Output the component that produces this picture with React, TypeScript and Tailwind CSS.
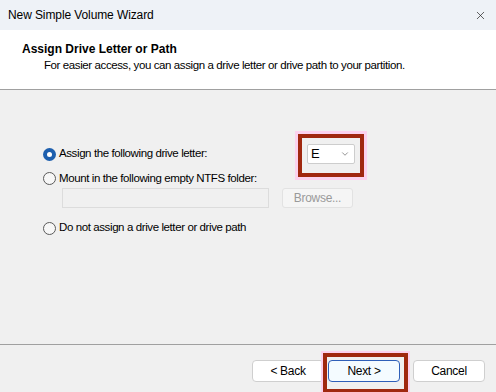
import { X, ChevronDown } from 'lucide-react';

// Win11-style wizard page: drive letter assignment

function Radio({ checked }: { checked?: boolean }) {
  if (checked) {
    return (
      <span className="w-[13px] h-[13px] rounded-full bg-[#1d5fae] flex items-center justify-center shrink-0">
        <span className="w-[5px] h-[5px] rounded-full bg-white" />
      </span>
    );
  }
  return <span className="w-[13px] h-[13px] rounded-full border border-[#5a5a5a] bg-[#f7f7f7] shrink-0" />;
}

function Btn({ label, primary }: { label: string; primary?: boolean }) {
  return (
    <div
      className={
        'w-[72px] h-[22px] rounded-[4px] flex items-center justify-center text-[12px] tracking-[-0.3px] text-black ' +
        (primary ? 'border border-[#2f5fb8] bg-[#f4fbff]' : 'border border-[#cfcfcf] bg-white')
      }
    >
      {label}
    </div>
  );
}

export default function App() {
  return (
    <div
      className="relative w-[496px] h-[392px] overflow-hidden bg-[#f0f0f0] flex flex-col text-black"
      style={{ fontFamily: '"Liberation Sans", Arial, sans-serif' }}
    >
      {/* Title bar */}
      <div className="h-[30px] bg-[#eef2f7] flex items-center justify-between pl-[8px] pr-[9px] shrink-0">
        <span className="text-[12px] tracking-[-0.1px]">New Simple Volume Wizard</span>
        <X className="w-[13px] h-[13px] text-[#222]" strokeWidth={1.3} />
      </div>

      {/* Header */}
      <div className="h-[60px] bg-white border-b border-[#a0a0a0] shrink-0 pl-[22px] pt-[11px]">
        <p className="text-[12px] font-bold leading-[16px]">Assign Drive Letter or Path</p>
        <p className="text-[11.5px] tracking-[-0.4px] leading-[16px] pl-[22px]">
          For easier access, you can assign a drive letter or drive path to your partition.
        </p>
      </div>

      {/* Body */}
      <div className="flex-1 pl-[43px] pt-[54px] text-[11.5px] tracking-[-0.4px]">
        <div className="h-[20px] flex items-center">
          <Radio checked />
          <span className="ml-[3px] w-[248px]">Assign the following drive letter:</span>
          <div className="relative w-[48px] h-[20px] bg-white border border-[#cdcdcd] rounded-[2px] flex items-center justify-between pl-[3px] pr-[4px]">
            <span className="text-[13px] tracking-normal">E</span>
            <ChevronDown className="w-[10px] h-[10px] text-[#555]" strokeWidth={1.5} />
            {/* annotation box */}
            <div className="absolute left-[-10px] top-[-11px] w-[66px] h-[43px] border-4 border-[#a0280f] shadow-[0_0_0_3px_#fcd2ee]" />
          </div>
        </div>

        <div className="h-[19px] mt-[5px] flex items-center">
          <Radio />
          <span className="ml-[3px]">Mount in the following empty NTFS folder:</span>
        </div>

        <div className="h-[20px] flex items-center pl-[19px]">
          <div className="w-[207px] h-[20px] border border-[#dcdcdc] bg-[#f0f0f0]" />
          <div className="ml-[13px] w-[71px] h-[20px] rounded-[3px] border border-[#e2e2e2] bg-[#f5f5f5] flex items-center justify-center text-[12px] tracking-[-0.3px] text-[#9a9a9a]">
            Browse...
          </div>
        </div>

        <div className="h-[20px] mt-[10px] flex items-center">
          <Radio />
          <span className="ml-[3px]">Do not assign a drive letter or drive path</span>
        </div>
      </div>

      {/* Footer */}
      <div className="h-[48px] border-t border-[#a0a0a0] shrink-0 flex items-start justify-end pt-[15px] pr-[11px]">
        <Btn label="< Back" />
        <div className="relative ml-[4px]">
          <Btn label="Next >" primary />
          <div className="absolute left-[-5px] top-[-7px] w-[85px] h-[40px] border-4 border-[#a0280f] shadow-[0_0_0_2px_#fcd2ee]" />
        </div>
        <div className="ml-[13px]">
          <Btn label="Cancel" />
        </div>
      </div>
    </div>
  );
}
